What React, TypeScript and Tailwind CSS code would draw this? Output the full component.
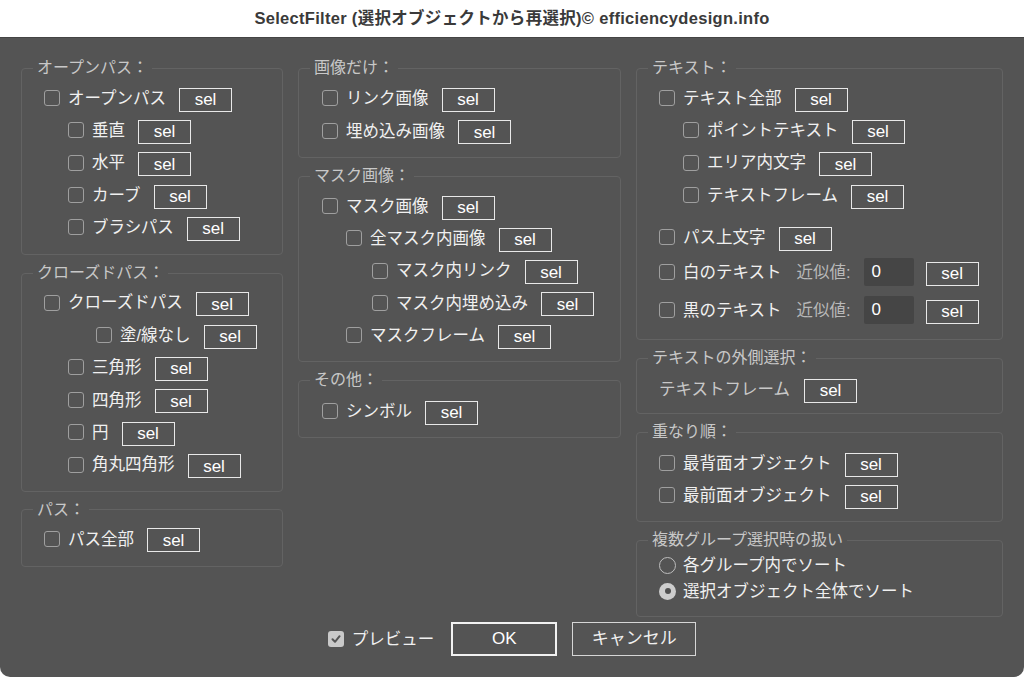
import React from "react";

const FONT = "font-['Liberation_Sans','Noto_Sans_CJK_JP',sans-serif]";

function CB({ checked = false }: { checked?: boolean }) {
  if (checked) {
    return (
      <span className="w-[16px] h-[16px] rounded-[3px] bg-[#c9c9c9] flex items-center justify-center shrink-0">
        <svg width="12" height="12" viewBox="0 0 12 12">
          <path d="M2.5 6.3 L5 8.8 L9.6 3.2" fill="none" stroke="#555555" strokeWidth="2" strokeLinecap="round" strokeLinejoin="round" />
        </svg>
      </span>
    );
  }
  return <span className="w-[16px] h-[16px] rounded-[3px] border-[1.5px] border-[#9f9f9f] shrink-0" />;
}

function Sel({ ml = "ml-[13px]" }: { ml?: string }) {
  return (
    <span
      className={`${ml} mt-[3px] w-[53px] h-[24px] border-[1.5px] border-[#e8e8e8] flex items-center justify-center text-[17px] leading-none text-white shrink-0`}
    >
      sel
    </span>
  );
}

function Row({ pl, label, h = "h-[32.3px]", extra }: { pl: string; label: string; h?: string; extra?: string }) {
  return (
    <div className={`flex items-center ${h} ${pl} ${extra ?? ""}`}>
      <CB />
      <span className="ml-[8px] text-[16.5px] leading-none text-[#f0f0f0] whitespace-nowrap">{label}</span>
      <Sel />
    </div>
  );
}

function Panel({ title, children, body }: { title: string; children: React.ReactNode; body: string }) {
  return (
    <fieldset className="border border-[#636363] rounded-[4px] p-0 m-0 min-w-0">
      <legend className="ml-[11px] px-[4px] text-[16px] leading-[20px] text-[#c8c8c8] whitespace-nowrap">{title}</legend>
      <div className={body}>{children}</div>
    </fieldset>
  );
}

function ApproxRow({ label, extra }: { label: string; extra: string }) {
  return (
    <div className={`flex items-center h-[36px] pl-[22px] ${extra}`}>
      <CB />
      <span className="ml-[8px] text-[16.5px] leading-none text-[#f0f0f0] whitespace-nowrap">{label}</span>
      <span className="ml-[15px] text-[16.5px] leading-none text-[#b9b9b9] whitespace-nowrap">近似値:</span>
      <span className="ml-[13px] w-[50px] h-[28px] bg-[#454545] rounded-[2px] flex items-center pl-[8px] text-[17px] text-white">0</span>
      <Sel ml="ml-[12px]" />
    </div>
  );
}

function Radio({ checked, label }: { checked?: boolean; label: string }) {
  return (
    <div className="flex items-center h-[26px] pl-[22px]">
      {checked ? (
        <span className="w-[17px] h-[17px] rounded-full bg-[#cdcdcd] flex items-center justify-center shrink-0">
          <span className="w-[6px] h-[6px] rounded-full bg-[#505050]" />
        </span>
      ) : (
        <span className="w-[17px] h-[17px] rounded-full border-[1.5px] border-[#bdbdbd] shrink-0" />
      )}
      <span className="ml-[7px] text-[16.5px] leading-none text-[#f0f0f0] whitespace-nowrap">{label}</span>
    </div>
  );
}

export default function App() {
  return (
    <div className={`w-[1024px] h-[677px] bg-white flex flex-col ${FONT}`}>
      <div className="h-[37px] shrink-0 flex items-center justify-center text-[16.5px] tracking-[0.3px] font-bold text-[#3a3a3a]">
        SelectFilter (選択オブジェクトから再選択)© efficiencydesign.info
      </div>
      <div className="flex-1 bg-[#545454] border-t border-[#444444] rounded-b-[10px] flex flex-col pt-[20px] px-[21px]">
        <div className="flex gap-[15px] items-start">
          {/* Left column */}
          <div className="w-[262px] flex flex-col gap-2">
            <Panel title="オープンパス：" body="pt-[4px] pb-[11px]">
              <Row pl="pl-[22px]" label="オープンパス" />
              <Row pl="pl-[46px]" label="垂直" />
              <Row pl="pl-[46px]" label="水平" />
              <Row pl="pl-[46px]" label="カーブ" />
              <Row pl="pl-[46px]" label="ブラシパス" />
            </Panel>
            <Panel title="クローズドパス：" body="pt-[3px] pb-[10px]">
              <Row pl="pl-[22px]" h="h-[32.4px]" label="クローズドパス" />
              <Row pl="pl-[74px]" h="h-[32.4px]" label="塗/線なし" />
              <Row pl="pl-[46px]" h="h-[32.4px]" label="三角形" />
              <Row pl="pl-[46px]" h="h-[32.4px]" label="四角形" />
              <Row pl="pl-[46px]" h="h-[32.4px]" label="円" />
              <Row pl="pl-[46px]" h="h-[32.4px]" label="角丸四角形" />
            </Panel>
            <Panel title="パス：" body="pt-[3px] pb-[11px]">
              <Row pl="pl-[22px]" h="h-[32px]" label="パス全部" />
            </Panel>
          </div>

          {/* Middle column */}
          <div className="w-[323px] flex flex-col gap-2">
            <Panel title="画像だけ：" body="pt-[4px] pb-[10px]">
              <Row pl="pl-[23px]" h="h-[32.5px]" label="リンク画像" />
              <Row pl="pl-[23px]" h="h-[32.5px]" label="埋め込み画像" />
            </Panel>
            <Panel title="マスク画像：" body="pt-[4px] pb-[10px]">
              <Row pl="pl-[23px]" h="h-[32.25px]" label="マスク画像" />
              <Row pl="pl-[47px]" h="h-[32.25px]" label="全マスク内画像" />
              <Row pl="pl-[73px]" h="h-[32.25px]" label="マスク内リンク" />
              <Row pl="pl-[73px]" h="h-[32.25px]" label="マスク内埋め込み" />
              <Row pl="pl-[47px]" h="h-[32.25px]" label="マスクフレーム" />
            </Panel>
            <Panel title="その他：" body="pt-[5px] pb-[10px]">
              <Row pl="pl-[23px]" h="h-[32px]" label="シンボル" />
            </Panel>
          </div>

          {/* Right column */}
          <div className="w-[367px] flex flex-col gap-2">
            <Panel title="テキスト：" body="pt-[4px] pb-[11px]">
              <Row pl="pl-[22px]" label="テキスト全部" />
              <Row pl="pl-[46px]" label="ポイントテキスト" />
              <Row pl="pl-[46px]" label="エリア内文字" />
              <Row pl="pl-[46px]" label="テキストフレーム" />
              <Row pl="pl-[22px]" h="h-[32px]" label="パス上文字" extra="mt-[10px]" />
              <ApproxRow label="白のテキスト" extra="mt-[1px]" />
              <ApproxRow label="黒のテキスト" extra="mt-[2px]" />
            </Panel>
            <Panel title="テキストの外側選択：" body="pt-[5px] pb-[8px]">
              <div className="flex items-center h-[32px] pl-[22px]">
                <span className="text-[16.5px] leading-none text-[#c8c8c8] whitespace-nowrap">テキストフレーム</span>
                <Sel ml="ml-[14px]" />
              </div>
            </Panel>
            <Panel title="重なり順：" body="pt-[5px] pb-[10px]">
              <Row pl="pl-[22px]" h="h-[32px]" label="最背面オブジェクト" />
              <Row pl="pl-[22px]" h="h-[32px]" label="最前面オブジェクト" />
            </Panel>
            <Panel title="複数グループ選択時の扱い" body="pt-[2px] pb-[12px]">
              <Radio label="各グループ内でソート" />
              <Radio checked label="選択オブジェクト全体でソート" />
            </Panel>
          </div>
        </div>

        {/* Bottom buttons */}
        <div className="mt-[5px] flex items-center justify-center h-[34px]">
          <CB checked />
          <span className="ml-[8px] text-[16.5px] leading-none text-[#f0f0f0]">プレビュー</span>
          <span className="ml-[17px] w-[106px] h-[34px] border-2 border-[#f2f2f2] flex items-center justify-center text-[17px] text-white">
            OK
          </span>
          <span className="ml-[15px] w-[124px] h-[34px] border-[1.5px] border-[#d6d6d6] flex items-center justify-center text-[17px] text-[#f0f0f0]">
            キャンセル
          </span>
        </div>
      </div>
    </div>
  );
}
